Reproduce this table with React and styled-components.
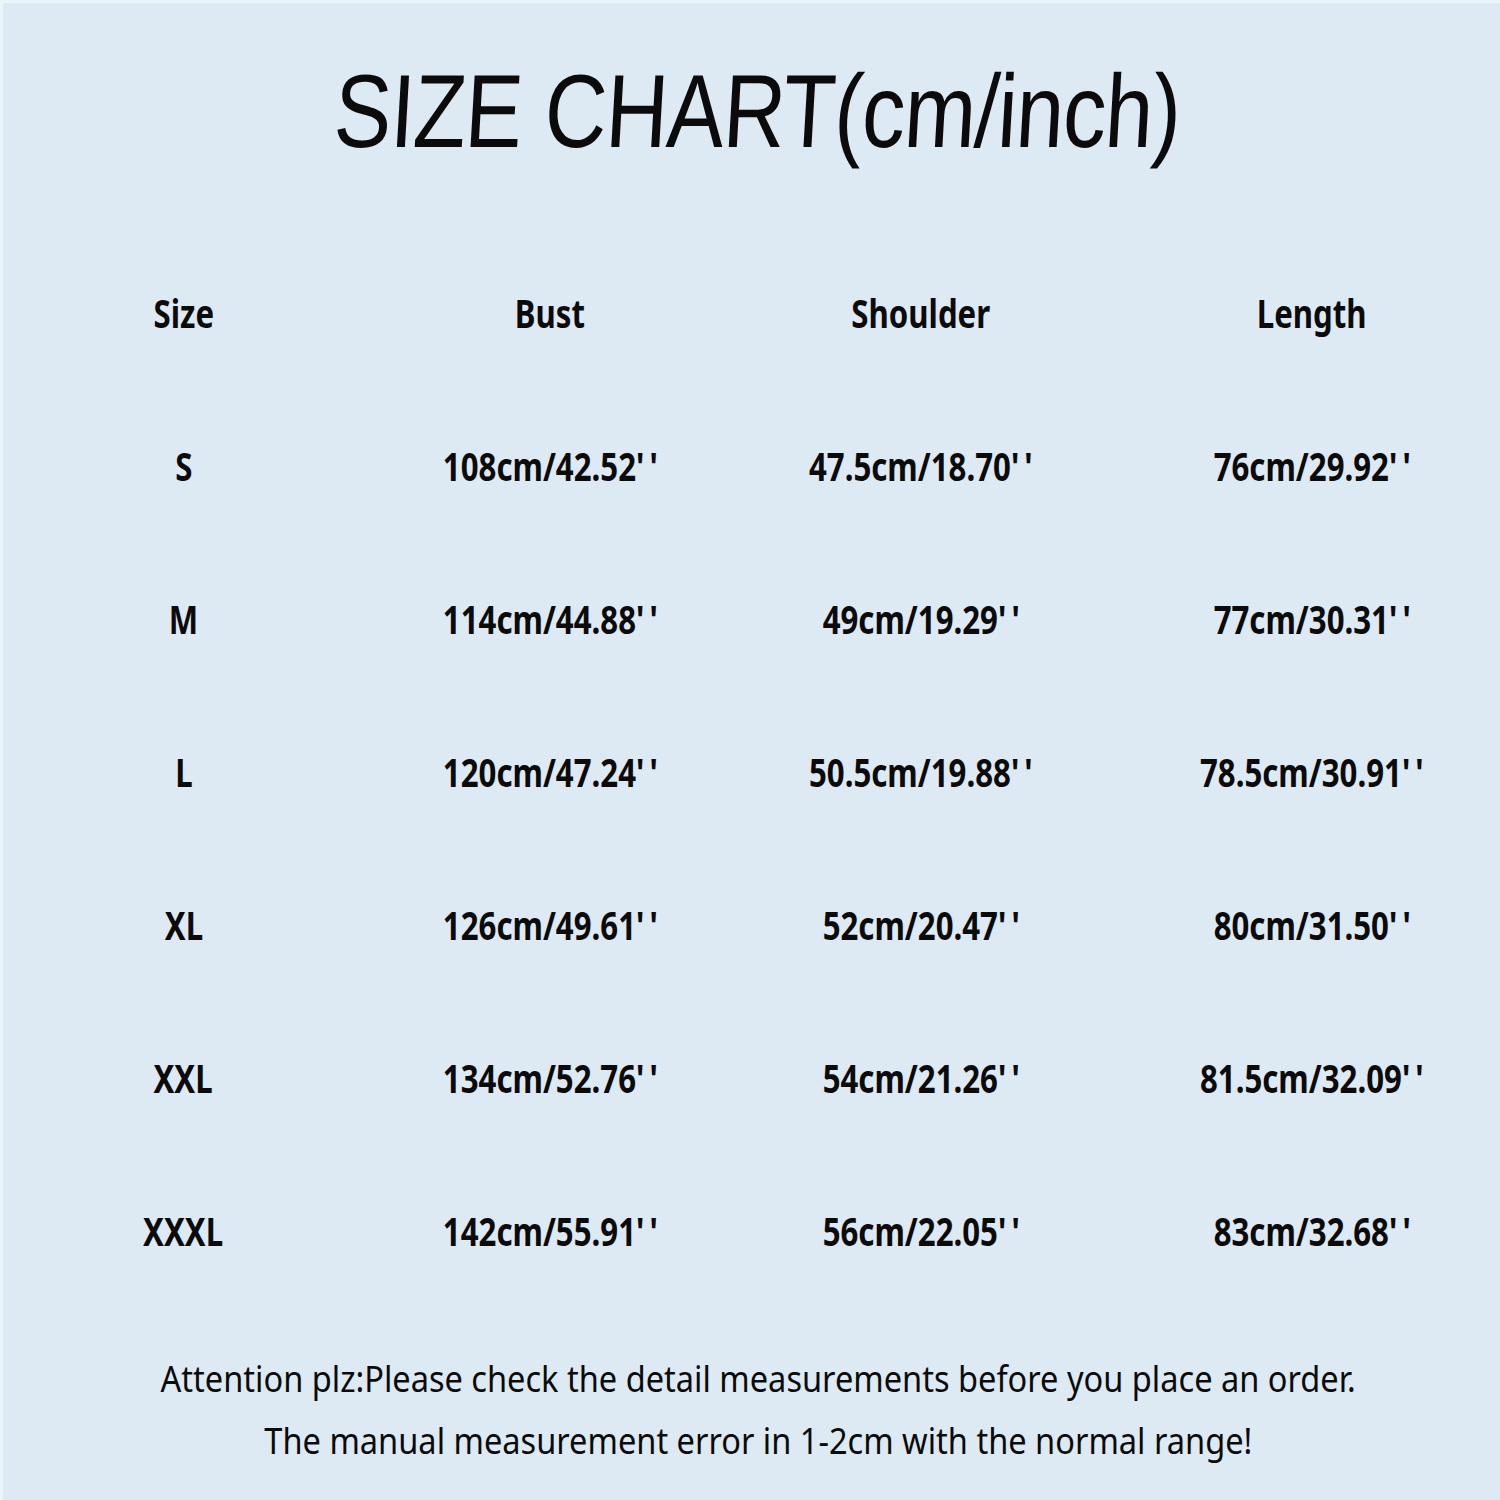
import React from "react";
import styled, { createGlobalStyle } from "styled-components";

const GlobalStyle = createGlobalStyle`
  html, body {
    margin: 0;
    padding: 0;
    background: #dde9f3;
    overflow: hidden;
  }
`;

const Page = styled.div`
  width: 1500px;
  height: 1500px;
  box-sizing: border-box;
  background: #dde9f3;
  border-top: 3px solid #e9f5f9;
  border-left: 3px solid #e9f5f9;
  display: flex;
  flex-direction: column;
  color: #0b0b0b;
`;

const TitleBar = styled.div`
  height: 233px;
  display: flex;
  align-items: center;
  justify-content: center;
  padding-bottom: 18px;
  padding-left: 12px;
  box-sizing: border-box;
`;

const Title = styled.h1`
  margin: 0;
  display: inline-block;
  font-family: "Liberation Sans", Arial, sans-serif;
  font-weight: 400;
  font-size: 104px;
  line-height: 1;
  letter-spacing: -1px;
  transform: scaleX(0.825) skewX(-4deg);
  white-space: nowrap;
`;

const Table = styled.div`
  display: flex;
  flex-direction: column;
`;

const Row = styled.div`
  display: grid;
  grid-template-columns: 361px 372px 370px 1fr;
  height: 153px;
  align-items: center;
`;

const Cell = styled.div`
  display: flex;
  justify-content: center;
  padding-left: ${(p) => (p.$last ? "18px" : "0")};
`;

const CellText = styled.span`
  display: inline-block;
  font-family: "Noto Sans", "Open Sans", sans-serif;
  font-weight: 700;
  font-size: 39px;
  line-height: 1;
  white-space: nowrap;
  transform: scaleX(0.8);
`;

const Notice = styled.div`
  margin-top: 40px;
  padding-left: 14px;
  display: flex;
  flex-direction: column;
  align-items: center;
`;

const NoticeLine = styled.span`
  display: inline-block;
  font-family: "Noto Sans", "Open Sans", sans-serif;
  font-weight: 400;
  font-size: 37px;
  line-height: 62px;
  white-space: nowrap;
  transform: scaleX(0.88);
`;

const header = ["Size", "Bust", "Shoulder", "Length"];

const rows = [
  ["S", "108cm/42.52' '", "47.5cm/18.70' '", "76cm/29.92' '"],
  ["M", "114cm/44.88' '", "49cm/19.29' '", "77cm/30.31' '"],
  ["L", "120cm/47.24' '", "50.5cm/19.88' '", "78.5cm/30.91' '"],
  ["XL", "126cm/49.61' '", "52cm/20.47' '", "80cm/31.50' '"],
  ["XXL", "134cm/52.76' '", "54cm/21.26' '", "81.5cm/32.09' '"],
  ["XXXL", "142cm/55.91' '", "56cm/22.05' '", "83cm/32.68' '"],
];

const SizeChart = () => {
  return (
    <Page>
      <TitleBar>
        <Title>SIZE CHART(cm/inch)</Title>
      </TitleBar>
      <Table>
        {[header, ...rows].map((row, i) => (
          <Row key={i}>
            {row.map((value, j) => (
              <Cell key={j} $last={j === row.length - 1}>
                <CellText>{value.replace("' '", "'\u2009'")}</CellText>
              </Cell>
            ))}
          </Row>
        ))}
      </Table>
      <Notice>
        <NoticeLine>
          Attention plz:Please check the detail measurements before you place an order.
        </NoticeLine>
        <NoticeLine>The manual measurement error in 1-2cm with the normal range!</NoticeLine>
      </Notice>
    </Page>
  );
};

export default function App() {
  return (
    <>
      <GlobalStyle />
      <SizeChart />
    </>
  );
}
